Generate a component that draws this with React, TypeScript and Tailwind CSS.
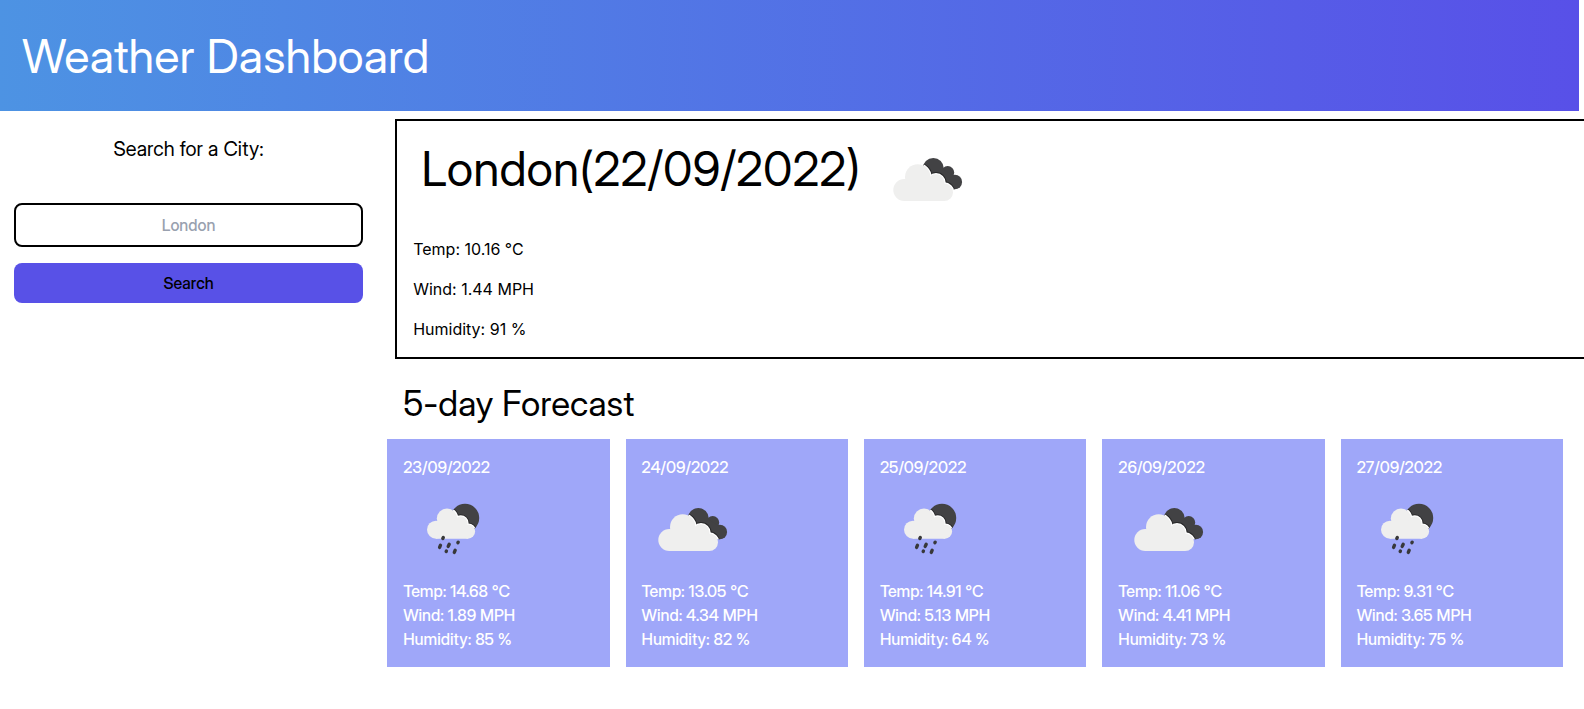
import React, { useId } from "react";

function BrokenClouds() {
  const id = useId();
  const back = (
    <>
      <circle cx="56.3" cy="39.5" r="10.5" />
      <circle cx="70.7" cy="43.5" r="6.5" />
      <circle cx="77.8" cy="53" r="7.3" />
      <path d="M50 40h16l12 8v12H62z" />
    </>
  );
  const front = (
    <>
      <circle cx="27.3" cy="61" r="11" />
      <circle cx="40.7" cy="48" r="12.7" />
      <circle cx="59" cy="53.8" r="8.5" />
      <circle cx="67.2" cy="63.2" r="8.8" />
      <path d="M27 51h30l10 10v11H27z" />
    </>
  );
  return (
    <svg viewBox="0 0 100 100" className="size-[100px] shrink-0" aria-hidden="true">
      <clipPath id={id}>{back}</clipPath>
      <g fill="#424244">{back}</g>
      <g clipPath={`url(#${id})`}>
        <g stroke="#29292a" strokeWidth="4.4">{front}</g>
        <g stroke="#ffffff" strokeWidth="2.4">{front}</g>
      </g>
      <g fill="#efefee">{front}</g>
    </svg>
  );
}

function RainAtNight() {
  const id = useId();
  const cloud = (
    <>
      <circle cx="33" cy="50.7" r="9" />
      <circle cx="44" cy="39.6" r="10.2" />
      <circle cx="57.7" cy="44.2" r="6.8" />
      <circle cx="65" cy="52.6" r="7.1" />
      <path d="M33 42h23l9 9v8.7H33z" />
    </>
  );
  return (
    <svg viewBox="0 0 100 100" className="size-[100px] shrink-0" aria-hidden="true">
      <clipPath id={id}>
        <circle cx="62" cy="39" r="14.2" />
      </clipPath>
      <circle cx="62" cy="39" r="14.2" fill="#424244" />
      <g clipPath={`url(#${id})`}>
        <g stroke="#29292a" strokeWidth="4.2">{cloud}</g>
        <g stroke="#ffffff" strokeWidth="2.2">{cloud}</g>
      </g>
      <g fill="#efefee">{cloud}</g>
      <g stroke="#38383a" strokeWidth="3.4" strokeLinecap="round">
        <path d="M40.3 58.5l-.5 1M37.5 66.2l-.9 2.2M46.2 65.2l-1 2.2M55.2 63.2l-.3.5M43.4 72.1l-.2.4M52.2 71.2l-.9 2.2" />
      </g>
    </svg>
  );
}

const forecast = [
  { date: "23/09/2022", temp: "14.68", wind: "1.89", humidity: "85", rain: true },
  { date: "24/09/2022", temp: "13.05", wind: "4.34", humidity: "82", rain: false },
  { date: "25/09/2022", temp: "14.91", wind: "5.13", humidity: "64", rain: true },
  { date: "26/09/2022", temp: "11.06", wind: "4.41", humidity: "73", rain: false },
  { date: "27/09/2022", temp: "9.31", wind: "3.65", humidity: "75", rain: true },
];

export default function App() {
  return (
    <div className="overflow-x-hidden bg-white font-['Inter_Display','Inter',sans-serif] text-base text-black">
      <header className="mr-[5px] bg-[linear-gradient(to_right,#4d93e3,#5850e8)] px-[22px] pt-8 pb-[31px]">
        <h1 className="text-[47px] leading-[48px] text-white">Weather Dashboard</h1>
      </header>
      <div className="flex">
        <aside className="w-[24%] shrink-0 pt-6 pr-[17px] pl-3.5">
          <form className="flex flex-col text-center" onSubmit={(e) => e.preventDefault()}>
            <label htmlFor="city" className="text-xl">
              Search for a City:
            </label>
            <input
              id="city"
              type="text"
              placeholder="London"
              className="mt-10 rounded-lg border-2 border-black p-2 text-center text-base font-medium placeholder:text-gray-400"
            />
            <button type="submit" className="mt-4 rounded-lg bg-[#5851e7] p-2 font-medium">
              Search
            </button>
          </form>
        </aside>
        <main className="min-w-0 flex-1 pl-[7px]">
          <section className="mt-2 ml-2 border-y-2 border-l-2 border-black p-2">
            <div className="flex">
              <h2 className="p-4 text-[48px] leading-[48px]">London(22/09/2022)</h2>
              <BrokenClouds />
            </div>
            <div className="font-['Inter',sans-serif]">
              <p className="p-2">Temp: 10.16 °C</p>
              <p className="p-2">Wind: 1.44 MPH</p>
              <p className="p-2">Humidity: 91 %</p>
            </div>
          </section>
          <h2 className="mt-2 p-4 text-[35px] leading-10">5-day Forecast</h2>
          <div className="mr-[21px] grid grid-cols-5 gap-4">
            {forecast.map((day) => (
              <article key={day.date} className="bg-[#9fa7f9] p-4 font-medium text-white">
                <h3>{day.date}</h3>
                {day.rain ? <RainAtNight /> : <BrokenClouds />}
                <p>Temp: {day.temp} °C</p>
                <p>Wind: {day.wind} MPH</p>
                <p>Humidity: {day.humidity} %</p>
              </article>
            ))}
          </div>
        </main>
      </div>
    </div>
  );
}
